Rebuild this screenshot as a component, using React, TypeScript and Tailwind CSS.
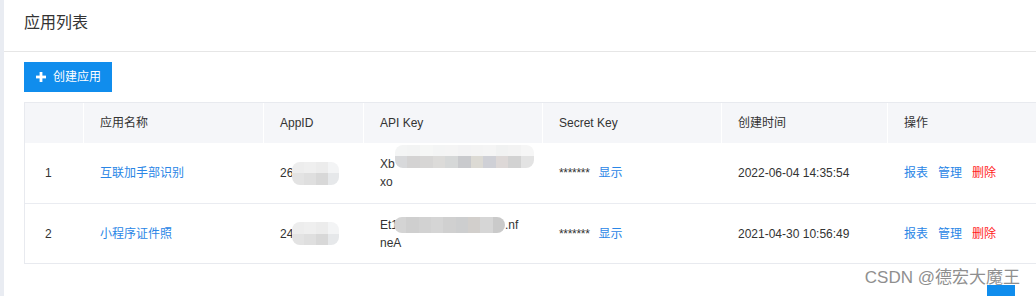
const cols = "grid grid-cols-[58px_180px_100px_179px_179px_166px_220px]";

const apps = [
  {
    id: 1,
    name: "互联加手部识别",
    appId: "26",
    keyHead: "Xb",
    keyTail: "",
    keyLine2: "xo",
    created: "2022-06-04 14:35:54",
  },
  {
    id: 2,
    name: "小程序证件照",
    appId: "24",
    keyHead: "Et1",
    keyTail: ".nf",
    keyLine2: "neA",
    created: "2021-04-30 10:56:49",
  },
];

// blurred mosaic tiles that hide the ids / keys
const idTop = ["bg-[#ededed]", "bg-[#efefef]", "bg-[#ececec]", "bg-[#f3f4f5]"];
const idBottom = ["bg-[#e3e3e3]", "bg-[#dfdfdf]", "bg-[#d8d8d8]", "bg-[#e6e8ea]"];
const keyTop = ["bg-[#f4f5f5]", "bg-[#f3f4f4]", "bg-[#f6f7f6]", "bg-[#f4f5f5]", "bg-[#f5f5f5]", "bg-[#f3f3f4]", "bg-[#f4f4f4]", "bg-[#f5f5f5]", "bg-[#f1f2f2]", "bg-[#f3f3f3]", "bg-[#f6f6f6]"];
const keyBottom = ["bg-[#d8d9db]", "bg-[#d4d3d3]", "bg-[#d7d6d5]", "bg-[#dcdbd9]", "bg-[#d6d8d8]", "bg-[#c9cacd]", "bg-[#dcdad4]", "bg-[#cfd0d6]", "bg-[#ddd8d7]", "bg-[#d2d2d2]", "bg-[#e3e3e3]"];
const key2 = ["bg-[#d4d4d4]", "bg-[#cfcfcf]", "bg-[#d2d2d2]", "bg-[#d5d5d5]", "bg-[#d0d0d0]", "bg-[#cdcecf]", "bg-[#d2cfcc]", "bg-[#d6d6d6]", "bg-[#cacaca]"];

const Mosaic = ({ top, bottom, cls }: { top?: string[]; bottom: string[]; cls: string }) => (
  <span className={`inline-flex flex-col overflow-hidden rounded-[8px] blur-[0.6px] ${cls}`}>
    {top && (
      <span className="flex flex-1">
        {top.map((c, i) => (
          <span key={i} className={`flex-1 ${c}`} />
        ))}
      </span>
    )}
    <span className="flex flex-1">
      {bottom.map((c, i) => (
        <span key={i} className={`flex-1 ${c}`} />
      ))}
    </span>
  </span>
);

const App = () => {
  return (
    <div className="relative flex h-[296px] w-[1036px] overflow-hidden bg-white font-['Liberation_Sans','Noto_Sans_CJK_SC',sans-serif] text-[12px] text-[#333]">
      <div className="w-[4px] shrink-0 bg-[#e9ecf2]" />
      <div className="min-w-0 flex-1">
        <div className="flex h-[52px] items-center border-b border-[#e6e6e6] pb-[6px] pl-[20px] text-[16px] text-[#333]">
          应用列表
        </div>
        <div className="pl-[20px] pt-[10px]">
          <button className="flex h-[30px] w-[88px] items-center gap-[7px] bg-[#108ded] pl-[12px] text-[12px] text-white">
            <svg width="10" height="10" viewBox="0 0 10 10" className="shrink-0">
              <rect x="3.6" y="0" width="2.8" height="10" fill="white" />
              <rect x="0" y="3.6" width="10" height="2.8" fill="white" />
            </svg>
            创建应用
          </button>

          <div className="mt-[10px] w-[1100px] border border-[#e8eaef]">
            <div className={`${cols} h-[40px] items-stretch bg-[#f5f6f9]`}>
              <div />
              {["应用名称", "AppID", "API Key", "Secret Key", "创建时间", "操作"].map((h) => (
                <div key={h} className="flex items-center border-l border-white pl-[16px]">
                  {h}
                </div>
              ))}
            </div>
            {apps.map((a, idx) => (
              <div
                key={a.id}
                className={`${cols} h-[60px] items-center ${idx > 0 ? "border-t border-[#eaecf1]" : ""}`}
              >
                <div className="pl-[20px]">{a.id}</div>
                <div className="pl-[17px] text-[#2a86e6]">{a.name}</div>
                <div className="flex items-center pl-[17px]">
                  <span className="relative z-0">{a.appId}</span>
                  <Mosaic top={idTop} bottom={idBottom} cls="-ml-[1px] h-[23px] w-[47px]" />
                </div>
                <div className="pl-[17px] leading-[18px]">
                  <div className="flex items-center">
                    <span>{a.keyHead}</span>
                    {a.keyTail ? (
                      <>
                        <Mosaic bottom={key2} cls="-ml-[4px] h-[16px] w-[111px]" />
                        <span>{a.keyTail}</span>
                      </>
                    ) : (
                      <Mosaic top={keyTop} bottom={keyBottom} cls="-mt-[16px] h-[23px] w-[139px]" />
                    )}
                  </div>
                  <div>{a.keyLine2}</div>
                </div>
                <div className="flex items-center pl-[17px]">
                  <span className="tracking-[-0.3px]">*******</span>
                  <span className="ml-[9px] text-[#2a86e6]">显示</span>
                </div>
                <div className="pl-[17px]">{a.created}</div>
                <div className="flex gap-[10px] pl-[17px]">
                  <span className="text-[#2a86e6]">报表</span>
                  <span className="text-[#2a86e6]">管理</span>
                  <span className="text-[#ff1c1c]">删除</span>
                </div>
              </div>
            ))}
          </div>
        </div>
      </div>

      {/* watermark and floating button */}
      <div className="absolute right-[16px] top-[265px] text-[17px] text-[#8f8f8f] [text-shadow:0_0_1px_#fff]">
        CSDN @德宏大魔王
      </div>
      <div className="absolute left-[987px] top-[285px] h-[20px] w-[28px] bg-[#108ded]" />
    </div>
  );
};

export default App;
